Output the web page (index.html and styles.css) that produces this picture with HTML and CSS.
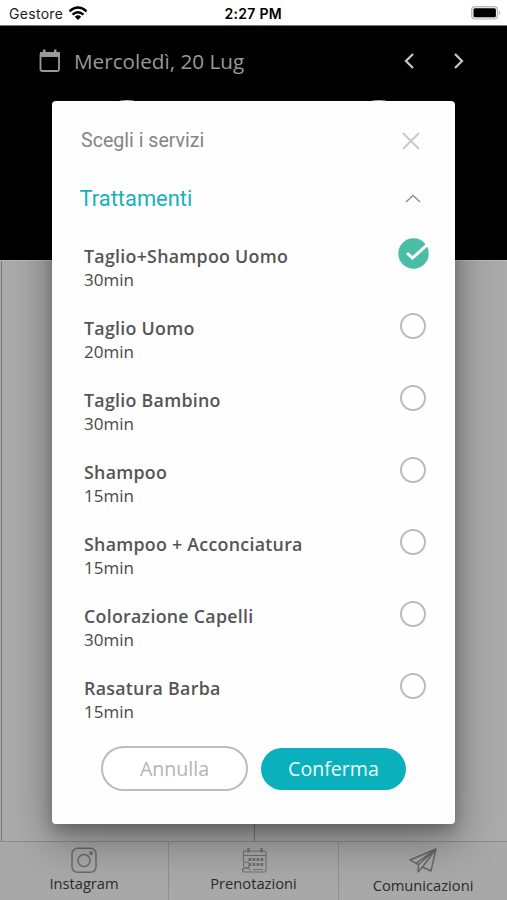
FILE: index.html
```html
<!DOCTYPE html>
<html lang="it">
<head>
<meta charset="utf-8">
<title>Prenotazioni</title>
<link rel="stylesheet" href="styles.css">
</head>
<body>
<div class="app">
  <header class="status">
    <span class="carrier">Gestore</span>
    <svg class="wifi" width="20" height="15" viewBox="0 0 20 15"><path d="M1.5 5.3Q10-2.3 18.5 5.3M4.5 8.6Q10 3.7 15.5 8.6" fill="none" stroke="#000" stroke-width="2.4"/><path d="M6.8 10.7Q10 8 13.2 10.7L10 14Z"/></svg>
    <span class="time">2:27 PM</span>
    <svg class="battery" width="30" height="14" viewBox="0 0 30 14"><rect x=".6" y=".6" width="26" height="12.4" rx="3.5" fill="#eee" stroke="#b9b9b9" stroke-width="1.2"/><rect x="2.5" y="2.3" width="22.4" height="9" rx="1.5"/><path d="M28 4.5q2 2.3 0 4.6z" fill="#aaa"/></svg>
  </header>
  <section class="datebar">
    <svg class="cal" width="22" height="24" viewBox="0 0 22 24"><rect x="1.5" y="4" width="18.5" height="18" rx="1.5" fill="none" stroke="#9a9a9a" stroke-width="1.8"/><path d="M1 3h20v5H1zM4 .5h2.5V4H4zM15 .5h2.5V4H15z" fill="#9a9a9a"/></svg>
    <span class="date">Mercoledì, 20 Lug</span>
    <svg class="arrows" width="62" height="18" viewBox="0 0 62 18"><path d="M10 2L3 9l7 7M52 2l7 7-7 7" fill="none" stroke="#c4c4c4" stroke-width="2.3"/></svg>
    <i class="avatar avatar-left"></i><i class="avatar avatar-right"></i>
  </section>
  <main class="agenda"><div class="column"></div><div class="column"></div></main>
  <nav class="tabs">
    <a class="tab"><svg width="28" height="27" viewBox="0 0 28 27" fill="none" stroke="#696969" stroke-width="1.5"><rect x="2" y="1.3" width="24" height="24" rx="5.5"/><circle cx="14" cy="13.5" r="6"/><circle cx="21" cy="6.2" r="1.2"/></svg><span>Instagram</span></a>
    <a class="tab"><svg width="28" height="27" viewBox="0 0 28 27" fill="none" stroke="#707070" stroke-width="1.1"><path d="M3.5 15V5.500Q3.500 4 5 4H24.500Q26 4 26 5.500V23.500Q26 25 24.500 25H4Q2.500 25 2.500 23.500V21M3.500 8.500H26"/><path d="M8.500 1v4.500M21.500 1v4.500" stroke-width="2.200"/><path d="M8.500 12.500h15M8.500 17.500h15" stroke-width="3" stroke-dasharray="2.800 1.200"/><circle cx="6.500" cy="18" r="3"/><path d="M2.500 23.500q4-5 8 0M13 22.500h10"/></svg><span>Prenotazioni</span></a>
    <a class="tab tab-send"><svg width="30" height="27" viewBox="0 0 30 27" fill="none" stroke="#656565" stroke-width="1.4" stroke-linejoin="round"><path d="M28 2L2 13l6 3.3L28 2l-5 22-8.500-4L28 2 10.500 17.500 10 25l4.500-5M8 16.300l2.500 1.200"/></svg><span>Comunicazioni</span></a>
  </nav>
  <section class="modal">
    <div class="modal-head"><span>Scegli i servizi</span><svg width="20" height="20" viewBox="0 0 20 20"><path d="M2 2l16 16M18 2L2 18" stroke="#c8c8c8" stroke-width="1.8"/></svg></div>
    <div class="group"><span>Trattamenti</span><svg width="16" height="10" viewBox="0 0 16 10"><path d="M1 9l7-6.500 7 6.500" fill="none" stroke="#8c8c8c" stroke-width="1.300"/></svg></div>
    <ul class="services">
      <li><div><b>Taglio+Shampoo Uomo</b><p>30min</p></div><svg class="check" width="31" height="31" viewBox="0 0 31 31"><circle cx="15.5" cy="15.5" r="15.2" fill="#49bda6"/><path d="M9 15l5.500 5L29 7" fill="none" stroke="#fff" stroke-width="3"/></svg></li>
      <li><div><b>Taglio Uomo</b><p>20min</p></div><i class="radio"></i></li>
      <li><div><b>Taglio Bambino</b><p>30min</p></div><i class="radio"></i></li>
      <li><div><b>Shampoo</b><p>15min</p></div><i class="radio"></i></li>
      <li><div><b>Shampoo + Acconciatura</b><p>15min</p></div><i class="radio"></i></li>
      <li><div><b>Colorazione Capelli</b><p>30min</p></div><i class="radio"></i></li>
      <li><div><b>Rasatura Barba</b><p>15min</p></div><i class="radio"></i></li>
    </ul>
    <div class="actions"><button class="cancel">Annulla</button><button class="confirm">Conferma</button></div>
  </section>
</div>
</body>
</html>
```
FILE: styles.css
```css
* { box-sizing: border-box; }
body { margin: 0; font-family: "Open Sans", sans-serif; overflow: hidden; }
svg { display: block; flex: none; }
.app { position: relative; width: 507px; height: 900px; display: flex; flex-direction: column; }
.status { height: 26px; display: grid; grid-template-columns: 59px 1fr auto 1fr; align-items: center; padding: 1px 6px 0 9px; background: #fff; border-bottom: 1px solid #777; font-family: Inter, sans-serif; font-size: 14px; flex: none; }
.carrier { letter-spacing: .3px; color: #222; }
.status .time { font-weight: 600; font-size: 14px; letter-spacing: .3px; margin-left: -60px; }
.battery { justify-self: end; }
.datebar { position: relative; height: 234px; background: #000; padding: 23px 42px 0 39px; display: flex; align-items: flex-start; flex: none; }
.date { margin-left: 13px; flex: 1; font-size: 20.7px; line-height: 24px; color: #999; white-space: nowrap; }
.arrows { margin-top: 3px; }
.avatar { position: absolute; top: 74px; width: 64px; height: 64px; border-radius: 50%; background: #ddd; }
.avatar-left { left: 95px; }
.avatar-right { left: 347px; }
.agenda { flex: 1; display: grid; grid-template-columns: 253px 1fr; background: #ababab; border-top: 1px solid #bbb; padding-left: 1px; }
.column { border-left: 1px solid #777; }
.tabs { height: 59px; display: grid; grid-template-columns: 168px 170px 1fr; background: #a8a8a8; border-top: 1px solid #8c8c8c; }
.tab { display: flex; flex-direction: column; align-items: center; padding-top: 5px; color: #2b2b2b; font-size: 14.7px; line-height: 19px; }
.tab + .tab { border-left: 1px solid #8f8f8f; }
.tab-send span { margin-top: 2px; }
.modal { position: absolute; left: 52px; top: 101px; width: 403px; height: 723px; background: #fefefe; border-radius: 4px; box-shadow: 0 14px 42px 4px rgba(0,0,0,.32), 0 6px 14px rgba(0,0,0,.22); padding: 26px 28px 0; }
.modal-head, .group { display: flex; justify-content: space-between; align-items: center; font-family: Roboto, sans-serif; }
.modal-head { height: 27px; padding: 0 6px 0 1px; color: #858585; font-size: 19.6px; }
.group { height: 30px; margin-top: 29px; padding-right: 6px; color: #17b0bb; font-size: 21.9px; }
.group span { margin-left: -.5px; }
.services { list-style: none; margin: 31px 0 0; padding: 0 0 0 4px; }
.services li { height: 72px; display: flex; justify-content: space-between; align-items: flex-start; color: #484848; }
.services b { display: block; font-weight: 600; font-size: 17.8px; letter-spacing: .28px; line-height: 24px; white-space: nowrap; color: #555; }
.services p { margin: 0; font-size: 17px; line-height: 24px; }
.check { margin: -6px -2px 0 0; }
.radio { width: 26px; height: 26px; border: 2px solid #bbb; border-radius: 50%; margin: -3px 1px 0 0; }
.actions { display: flex; align-items: center; gap: 13px; margin-left: 21px; margin-top: -2px; }
.actions button { font: 19.6px "Open Sans", sans-serif; border-radius: 23px; padding: 0; }
.cancel { width: 147px; height: 45px; background: #fff; border: 2px solid #bcbcbc; color: #b4b4b4; }
.confirm { width: 145px; height: 42px; background: #0bb0bd; border: 0; color: #e8ffff; }
```
